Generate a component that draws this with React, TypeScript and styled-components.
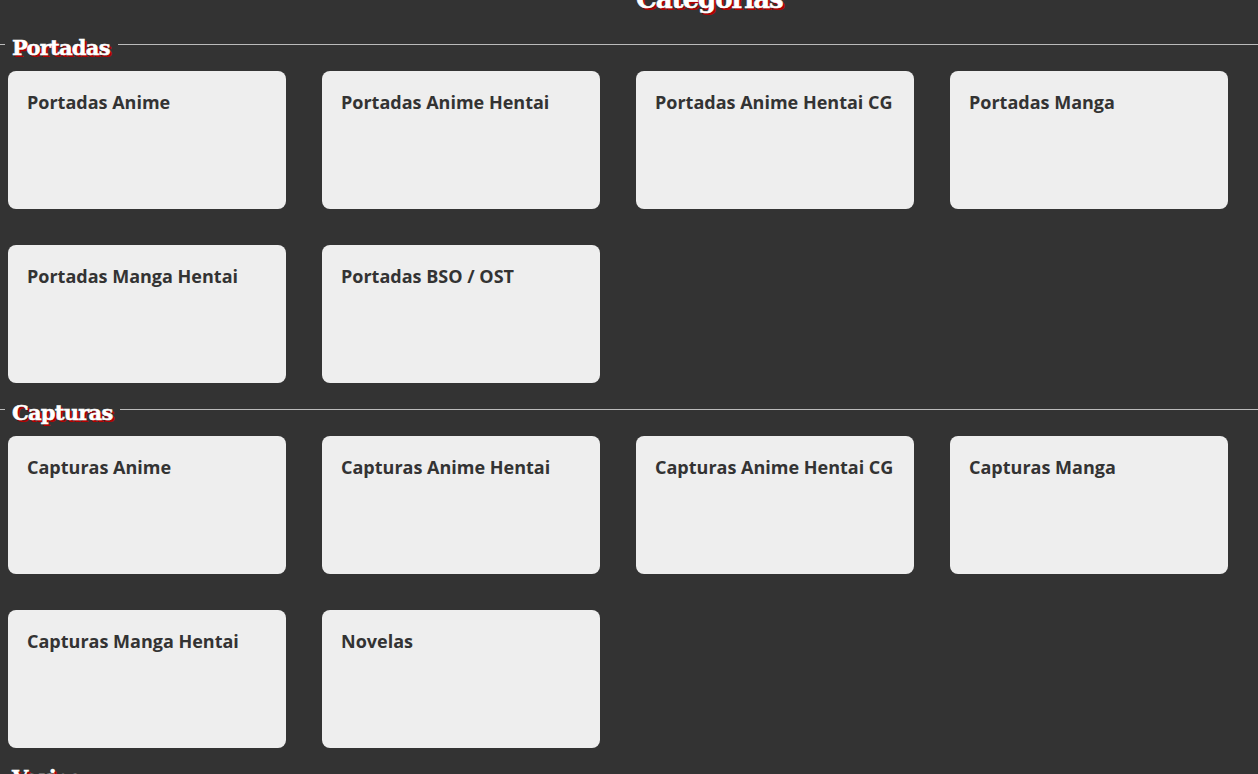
import styled, { createGlobalStyle } from "styled-components";

const GlobalStyle = createGlobalStyle`
  html, body {
    margin: 0;
    height: 100%;
    overflow: hidden;
    background-color: #333333;
  }
`;

const headingFont = `"DejaVu Serif", "Liberation Serif", serif`;

const Page = styled.div`
  width: 1258px;
  height: 774px;
  overflow: hidden;
  background-color: #333333;
`;

const PageTitle = styled.h1`
  margin: -19px 0 9px 636px;
  height: 37px;
  font-family: ${headingFont};
  font-size: 26px;
  line-height: 37px;
  font-weight: 700;
  letter-spacing: -1px;
  color: #ffffff;
  -webkit-text-stroke: 0.5px #ffffff;
  text-shadow: 2px 2px 0 #b00000;
  white-space: nowrap;
`;

const Section = styled.fieldset`
  margin: 0 0 9px;
  padding: 10px 8px 0;
  min-width: 0;
  border: none;
  border-top: 1px solid #bbbbbb;
`;

const Legend = styled.legend`
  margin-left: -3px;
  padding: 8px 8px 0 7px;
  font-family: ${headingFont};
  font-size: 21px;
  line-height: 26px;
  font-weight: 700;
  letter-spacing: -0.75px;
  color: #ffffff;
  -webkit-text-stroke: 0.5px #ffffff;
  text-shadow: 2px 2px 0 #b00000;
`;

const CardGrid = styled.div`
  display: grid;
  grid-template-columns: repeat(4, 278px);
  grid-auto-rows: 138px;
  gap: 36px;
`;

const Card = styled.a`
  display: block;
  box-sizing: border-box;
  padding: 19px;
  border-radius: 8px;
  background-color: #eeeeee;
  font-family: "Open Sans", sans-serif;
  font-size: 18px;
  line-height: 25px;
  font-weight: 700;
  color: #333333;
`;

interface CategorySection {
  title: string;
  items: string[];
}

const sections: CategorySection[] = [
  {
    title: "Portadas",
    items: [
      "Portadas Anime",
      "Portadas Anime Hentai",
      "Portadas Anime Hentai CG",
      "Portadas Manga",
      "Portadas Manga Hentai",
      "Portadas BSO / OST",
    ],
  },
  {
    title: "Capturas",
    items: [
      "Capturas Anime",
      "Capturas Anime Hentai",
      "Capturas Anime Hentai CG",
      "Capturas Manga",
      "Capturas Manga Hentai",
      "Novelas",
    ],
  },
  { title: "Varios", items: [] },
];

export default function App() {
  return (
    <Page>
      <GlobalStyle />
      <PageTitle>Categorías</PageTitle>
      {sections.map((section) => (
        <Section key={section.title}>
          <Legend>{section.title}</Legend>
          <CardGrid>
            {section.items.map((item) => (
              <Card key={item}>{item}</Card>
            ))}
          </CardGrid>
        </Section>
      ))}
    </Page>
  );
}
